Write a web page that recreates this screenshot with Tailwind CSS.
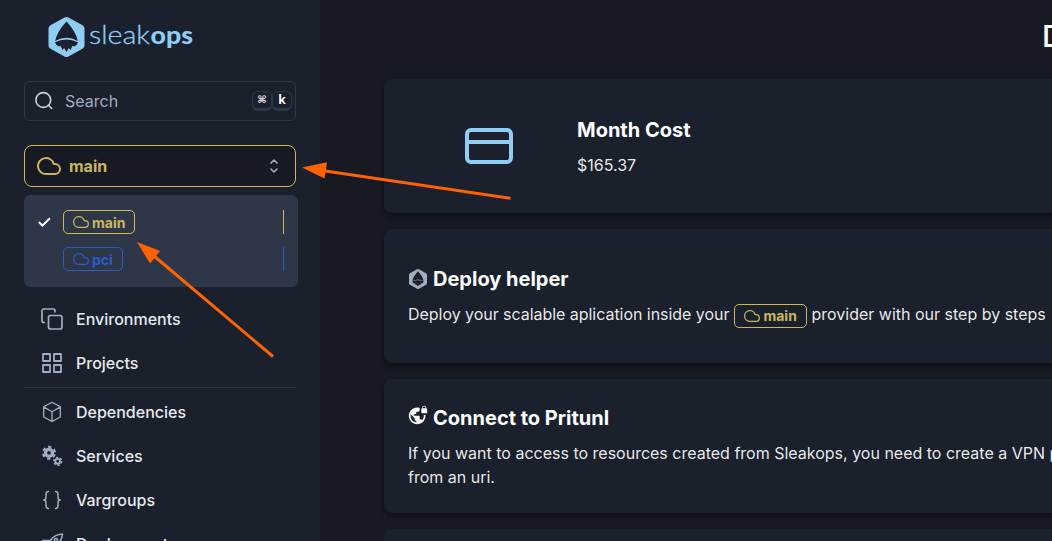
<!DOCTYPE html>
<html lang="en">
<head>
<meta charset="utf-8">
<title>Sleakops</title>
<script src="https://cdn.jsdelivr.net/npm/@tailwindcss/browser@4"></script>
</head>
<body class="relative h-[541px] w-[1052px] overflow-hidden bg-[#171923] font-['Inter',sans-serif] text-base text-white/92">
<svg class="hidden">
  <symbol id="cloud" viewBox="0 0 24 24"><path fill="none" stroke="currentColor" stroke-width="2" stroke-linecap="round" stroke-linejoin="round" d="M18 10h-1.260A8 8 0 1 0 9 20h9a5 5 0 0 0 0-10z"/></symbol>
  <symbol id="cloud-thin" viewBox="0 0 24 24"><path fill="none" stroke="currentColor" stroke-width="1.900" stroke-linecap="round" stroke-linejoin="round" d="M18 10h-1.260A8 8 0 1 0 9 20h9a5 5 0 0 0 0-10z"/></symbol>
  <symbol id="mark" viewBox="0 0 36 40"><path fill="currentColor" fill-rule="evenodd" d="M16 .6Q18 -.4 20 .6L34 8.300Q36 9.400 36 11.500V28.500Q36 30.600 34 31.700L20 39.400Q18 40.400 16 39.400L2 31.700Q0 30.600 0 28.500V11.500Q0 9.400 2 8.300ZM18 4.500C14.500 8.500 8.500 15 6.700 24Q18 17.500 29.300 24C27.500 15 21.500 8.500 18 4.500ZM6.500 25.200Q7.500 28.500 10.500 29.500L12 28.700L14 33L15.700 31L18 35L20.300 31L22 33L24 28.700L25.500 29.500Q28.500 28.500 29.500 25.200Q18 20 6.500 25.200Z"/></symbol>
</svg>
<div class="flex h-[541px] overflow-hidden">
  <aside class="flex w-80 shrink-0 flex-col bg-[#1a202c] px-6 pt-[17px]">
    <div class="flex h-10 shrink-0 pl-6 text-[#90cdf4]">
      <svg class="h-10 w-9.25 shrink-0"><use href="#mark"/></svg>
      <svg class="h-10 w-[112px] overflow-visible font-['Lato',sans-serif] text-[25px]" fill="currentColor"><text x="4" y="27" textLength="61" lengthAdjust="spacingAndGlyphs" class="font-light" stroke="currentColor" stroke-width=".3">sleak</text><text x="65.500" y="27" textLength="42.500" lengthAdjust="spacingAndGlyphs" class="font-black">ops</text></svg>
    </div>
    <div class="mt-6 flex h-10 shrink-0 items-center rounded-md border border-[#2d3748] pr-[3px] pl-[9px] text-[#a0aec0]">
      <svg class="size-5 text-[#cbd5e0]" viewBox="0 0 20 20" fill="none" stroke="currentColor" stroke-width="1.600" stroke-linecap="round"><circle cx="9.300" cy="9" r="7.400"/><path d="m14.500 14.300 3.200 3.200"/></svg>
      <span class="ml-[11px] flex-1">Search</span>
      <kbd class="flex h-5 w-5 items-center justify-center rounded-md border border-b-3 border-[#2d3748] pb-0.5 font-['DejaVu_Sans',monospace] text-[10px] font-bold text-white/90">⌘</kbd>
      <kbd class="flex h-5 w-5 items-center justify-center rounded-md border border-b-3 border-[#2d3748] font-['Noto_Sans',monospace] text-[12px] font-bold text-white">k</kbd>
    </div>
    <div class="relative mt-6 flex h-[42px] shrink-0 items-center rounded-lg border border-[#d0b955] bg-[#171923] pr-[11px] pl-3 text-[#cbb75a]">
      <svg class="h-6 w-6"><use href="#cloud"/></svg>
      <span class="ml-2 flex-1 font-bold">main</span>
      <svg class="mr-1 h-4 w-3 text-[#a0aec0]" viewBox="0 0 12 16" fill="none" stroke="currentColor" stroke-width="1.600" stroke-linecap="round" stroke-linejoin="round"><path d="m3 5 3-3 3 3M3 11l3 3 3-3"/></svg>
      <div class="absolute top-[49px] -left-px z-10 flex h-[92px] w-[274px] flex-col gap-[13px] rounded-md bg-[#2d3748] pt-[15px] pr-3.5 pl-3.5 text-sm font-bold">
        <div class="flex h-6 items-center border-r border-[#d0b955]">
          <svg class="mr-3 h-3 w-[13px] text-white" viewBox="0 0 13 12" fill="none" stroke="currentColor" stroke-width="2"><path d="m.8 6 3.700 3.700 7.300-7.500"/></svg>
          <span class="flex h-6 items-center gap-[3px] rounded-[5px] border border-[#d0b955] px-[9px]"><svg class="size-4"><use href="#cloud-thin"/></svg><span class="pt-0.5">main</span></span>
        </div>
        <div class="flex h-6 items-center border-r border-[#2b5acb] pl-[25px] text-[#2b5acb]">
          <span class="flex h-6 items-center gap-[3px] rounded-[5px] border border-[#2b5acb] px-[9px]"><svg class="size-4"><use href="#cloud-thin"/></svg><span class="pt-0.5">pci</span></span>
        </div>
      </div>
    </div>
    <nav class="mt-[110px] flex flex-col font-medium text-[#e7eaef]">
      <a class="flex h-11 shrink-0 items-center gap-3 pl-4"><svg class="size-6 text-[#a0aec0]" viewBox="0 0 24 24" fill="none" stroke="currentColor" stroke-width="1.700"><rect x="8.500" y="8.500" width="13.500" height="13.500" rx="2"/><path d="M5 15.500H4a2 2 0 0 1-2-2V4a2 2 0 0 1 2-2h9a2 2 0 0 1 2 2v1.500"/></svg>Environments</a>
      <a class="flex h-11 shrink-0 items-center gap-3 pl-4"><svg class="size-6 text-[#a0aec0]" viewBox="0 0 24 24" fill="none" stroke="currentColor" stroke-width="1.800" stroke-linejoin="round"><path d="M3 3h7v7H3zM14 3h7v7h-7zM3 14h7v7H3zM14 14h7v7h-7z"/></svg>Projects</a>
      <div class="mt-[2px] mb-[2px] h-px shrink-0 bg-[#2d3748]"></div>
      <a class="flex h-11 shrink-0 items-center gap-3 pl-4"><svg class="size-6 text-[#a0aec0]" viewBox="0 0 24 24" fill="none" stroke="currentColor" stroke-width="1.300" stroke-linejoin="round"><path d="m12 2.300 8.300 4.500v10.200L12 21.500l-8.300-4.500V6.800ZM3.700 6.900l8.300 4.800 8.300-4.800M12 11.700v9.800"/></svg>Dependencies</a>
      <a class="flex h-11 shrink-0 items-center gap-3 pl-4"><svg class="size-6 text-[#a0aec0]" viewBox="0 0 24 24" fill="none" stroke="currentColor"><circle cx="9" cy="8.800" r="3.500" stroke-width="3.200"/><circle cx="9" cy="8.800" r="5.900" stroke-width="2.200" stroke-dasharray="3.200 2.978" stroke-dashoffset="-1.500"/><circle cx="17.700" cy="17.300" r="2.400" stroke-width="1.900"/><circle cx="17.700" cy="17.300" r="3.900" stroke-width="1.500" stroke-dasharray="2 2.084"/></svg>Services</a>
      <a class="flex h-11 shrink-0 items-center gap-3 pl-4"><svg class="size-6 text-[#a0aec0]" viewBox="0 0 24 24" fill="none" stroke="currentColor" stroke-width="1.500" stroke-linecap="round" stroke-linejoin="round"><path d="M8.500 3.500C6 3.500 6 4.800 6 6.500v2.700C6 11 5.200 12 3.700 12c1.500 0 2.300 1 2.300 2.800v2.700c0 1.700 0 3 2.500 3M15.500 3.500c2.500 0 2.500 1.300 2.500 3v2.700c0 1.800.8 2.800 2.300 2.800-1.500 0-2.300 1-2.300 2.800v2.700c0 1.700 0 3-2.500 3"/></svg>Vargroups</a>
      <a class="flex h-11 shrink-0 items-center gap-3 pl-4"><svg class="size-6 text-[#a0aec0]" viewBox="0 0 24 24" fill="none" stroke="currentColor" stroke-width="1.500" stroke-linejoin="round"><path d="M8 14c2-7 6.500-11.500 14.500-12C22 9 17 13.500 10 16ZM11.500 8.500H2.500L6 12.200M16 13v4.500L12 21v-6"/><circle cx="16" cy="8" r="1.500"/></svg>Deployments</a>
    </nav>
  </aside>
  <main class="flex w-[1400px] shrink-0 flex-col px-16">
    <h1 class="h-[79px] shrink-0 pt-[14px] pl-[658px] text-3xl leading-[45px] font-medium text-white">Dashboard</h1>
    <div class="flex flex-col gap-4">
      <section class="flex h-[134px] shrink-0 items-center rounded-lg bg-[#1a202c] shadow-md shadow-black/30">
        <svg class="mr-[60px] ml-[77px] h-14 w-14 text-[#90cdf4]" viewBox="0 0 56 56" fill="none" stroke="currentColor" stroke-width="4"><rect x="6" y="12" width="44" height="32" rx="4"/><path d="M6 24h44"/></svg>
        <div class="pt-0.5"><h2 class="text-xl leading-6 font-bold text-white">Month Cost</h2><p class="mt-[11px]">$165.37</p></div>
      </section>
      <section class="flex h-[134px] shrink-0 flex-col justify-center rounded-lg bg-[#1a202c] px-6 shadow-md shadow-black/30">
        <h2 class="flex items-center gap-[5px] text-xl leading-6 font-bold text-white"><svg class="h-5 w-5 text-[#a0aec0]" viewBox="-1 0 38 40"><use href="#mark" width="36" height="40"/></svg>Deploy helper</h2>
        <p class="mt-[11px] flex h-6 items-center whitespace-nowrap"><span class="tracking-[-0.040px]">Deploy your scalable aplication inside your</span><span class="mt-1 mr-1 ml-[5px] flex h-6 w-[73px] shrink-0 items-center gap-[3px] rounded-[5px] border border-[#d0b955] pl-[9px] text-sm font-bold text-[#cbb75a]"><svg class="size-4"><use href="#cloud-thin"/></svg><span class="pt-px">main</span></span>provider with our step by steps</p>
      </section>
      <section class="flex h-[134px] shrink-0 flex-col rounded-lg bg-[#1a202c] px-6 pt-[27px] shadow-md shadow-black/30">
        <h2 class="flex h-6 items-center gap-[5px] text-xl leading-6 font-bold text-white"><svg class="mb-1.5 h-5 w-5" viewBox="0 0 24 24" fill="currentColor"><path d="M22 4v-.500a2.500 2.500 0 0 0-5 0V4c-.55 0-1 .45-1 1v4c0 .55.45 1 1 1h5c.55 0 1-.45 1-1V5c0-.55-.45-1-1-1m-.8 0h-3.400v-.500c0-.94.76-1.700 1.700-1.700s1.700.76 1.700 1.700zm-2.280 8c.04.33.08.66.08 1 0 2.080-.8 3.970-2.100 5.390-.26-.81-1-1.390-1.900-1.390h-1v-3c0-.55-.45-1-1-1H7v-2h2c.55 0 1-.45 1-1V8h2c1.100 0 2-.9 2-2V3.460c-.95-.3-1.950-.46-3-.46C5.480 3 1 7.480 1 13s4.480 10 10 10 10-4.480 10-10c0-.34-.02-.67-.05-1zM10 20.930c-3.950-.49-7-3.850-7-7.930 0-.62.08-1.210.21-1.790L8 16v1c0 1.100.9 2 2 2z"/></svg>Connect to Pritunl</h2>
        <p class="mt-[11px] whitespace-nowrap">If you want to access to resources created from Sleakops, you need to create a VPN profile<br>from an uri.</p>
      </section>
      <section class="h-[134px] shrink-0 rounded-lg bg-[#1a202c]"></section>
    </div>
  </main>
</div>
<svg class="absolute inset-0 z-20 h-[541px] w-[1052px]" fill="#ff6200" stroke="#ff6200"><path stroke-width="3" d="M510.500 198.300 322 170.500M273 356.500 154 256"/><path stroke="none" d="m302 167.500 25-5.200-2.400 16.200ZM137 242l23 9-10 12.500Z"/></svg>
</body>
</html>
